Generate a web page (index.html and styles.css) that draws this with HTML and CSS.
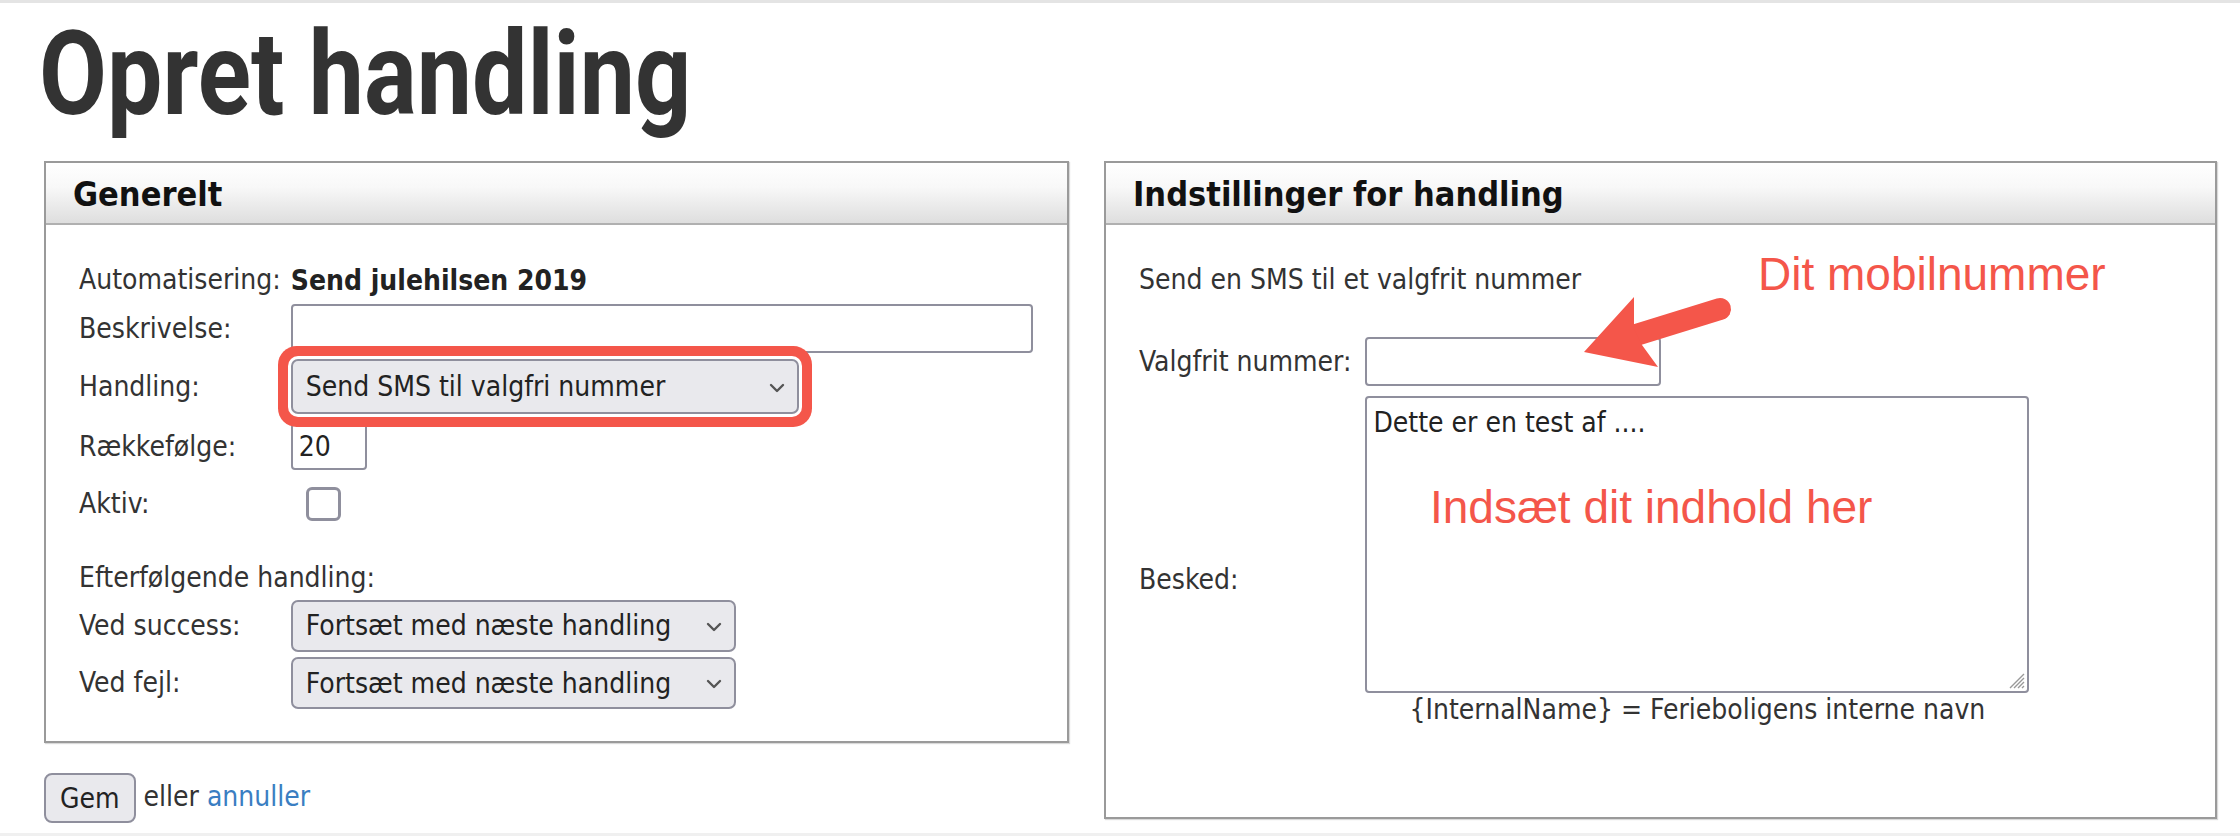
FILE: index.html
```html
<!DOCTYPE html>
<html lang="da">
<head>
  <meta charset="UTF-8">
  <meta name="viewport" content="width=device-width, initial-scale=1.0">
  <title>Opret handling</title>
  <link rel="stylesheet" href="styles.css">
</head>
<body>
  <div class="page">
    <h1>Opret handling</h1>

    <form class="layout">
      <!-- Generelt -->
      <div class="panel panel-general">
        <div class="panel-head">Generelt</div>
        <div class="panel-body fields">
          <span class="label">Automatisering:</span>
          <strong class="value">Send julehilsen 2019</strong>

          <label class="label" for="description">Beskrivelse:</label>
          <input type="text" id="description" class="input input-wide">

          <label class="label" for="action">Handling:</label>
          <div class="select-wrap">
            <select id="action" class="select select-action highlight">
              <option>Send SMS til valgfri nummer</option>
            </select>
            <svg class="chevron" width="16" height="10" viewBox="0 0 16 10"><path d="M2 2 L8 8 L14 2" fill="none" stroke="#555" stroke-width="2.4" stroke-linecap="round" stroke-linejoin="round"/></svg>
          </div>

          <label class="label" for="order">Rækkefølge:</label>
          <input type="text" id="order" class="input input-small" value="20">

          <label class="label" for="active">Aktiv:</label>
          <input type="checkbox" id="active" class="checkbox">

          <span class="label label-group">Efterfølgende handling:</span>

          <label class="label" for="onSuccess">Ved success:</label>
          <div class="select-wrap">
            <select id="onSuccess" class="select select-next">
              <option>Fortsæt med næste handling</option>
            </select>
            <svg class="chevron" width="16" height="10" viewBox="0 0 16 10"><path d="M2 2 L8 8 L14 2" fill="none" stroke="#555" stroke-width="2.4" stroke-linecap="round" stroke-linejoin="round"/></svg>
          </div>

          <label class="label" for="onError">Ved fejl:</label>
          <div class="select-wrap">
            <select id="onError" class="select select-next">
              <option>Fortsæt med næste handling</option>
            </select>
            <svg class="chevron" width="16" height="10" viewBox="0 0 16 10"><path d="M2 2 L8 8 L14 2" fill="none" stroke="#555" stroke-width="2.4" stroke-linecap="round" stroke-linejoin="round"/></svg>
          </div>
        </div>
      </div>

      <!-- Indstillinger for handling -->
      <div class="panel panel-settings">
        <div class="panel-head">Indstillinger for handling</div>
        <div class="panel-body">
          <p class="intro">Send en SMS til et valgfrit nummer</p>
          <div class="fields settings-fields">
            <label class="label" for="number">Valgfrit nummer:</label>
            <input type="text" id="number" class="input input-number">

            <label class="label label-message" for="message">Besked:</label>
            <div class="textarea-wrap">
              <textarea id="message" class="textarea">Dette er en test af ....</textarea>
              <svg class="grip" width="18" height="18" viewBox="0 0 18 18">
                <path d="M17 3 L3 17 M17 7 L7 17 M17 11 L11 17 M17 15 L15 17" stroke="#999" stroke-width="1.4"/>
              </svg>
            </div>

            <span class="hint">{InternalName} = Ferieboligens interne navn</span>
          </div>
        </div>

        <!-- annotations -->
        <span class="note note-number">Dit mobilnummer</span>
        <svg class="note-arrow" width="160" height="90" viewBox="0 0 160 90">
          <line x1="146" y1="24" x2="62" y2="50" stroke="#f4564a" stroke-width="22" stroke-linecap="round"/>
          <path d="M10 67 L60 12 L60 44 L68 60 L84 82 Z" fill="#f4564a"/>
        </svg>
        <span class="note note-message">Indsæt dit indhold her</span>
      </div>

      <div class="actions">
        <button type="button" class="button">Gem</button> eller <a href="#" class="cancel">annuller</a>
      </div>
    </form>
  </div>
</body>
</html>
```

FILE: styles.css
```css
* {
  box-sizing: border-box;
}
body {
  margin: 0;
  background: #fff;
  font-family: "DejaVu Sans Condensed", "DejaVu Sans", sans-serif;
  font-size: 28px;
  color: #333;
}
.page {
  height: 836px;
  padding-left: 44px;
  border-top: 3px solid #e4e4e4;
  border-bottom: 3px solid #f0f0f0;
  overflow: hidden;
}
h1 {
  margin: 13px 0 0 -5px;
  font-family: Roboto, "Liberation Sans", sans-serif;
  font-weight: 700;
  font-size: 116px;
  line-height: 116px;
  color: #333;
  transform: scaleX(0.85);
  transform-origin: left center;
}

/* two panels side by side, actions under the first one */
.layout {
  display: grid;
  grid-template-columns: 1025px 1113px;
  column-gap: 35px;
  align-items: start;
  margin-top: 29px;
}
.panel {
  background: #fff;
  border: 2px solid #9a9a9a;
  box-shadow: 1px 1px 1px rgba(0, 0, 0, 0.15);
}
.panel-general {
  grid-column: 1;
  grid-row: 1;
}
.panel-settings {
  grid-column: 2;
  grid-row: 1 / span 2;
  position: relative;
}
.panel-head {
  height: 62px;
  padding: 2px 0 0 27px;
  border-bottom: 2px solid #b0b0b0;
  background: linear-gradient(#fff 0%, #f8f8f8 40%, #dedede 100%);
  font-weight: bold;
  font-size: 34px;
  line-height: 58px;
  color: #111;
}
.panel-body {
  padding: 33px 33px 27px;
}

/* label / control rows */
.fields {
  display: grid;
  grid-template-columns: max-content 1fr;
  column-gap: 10px;
  align-items: center;
}
.panel-general .fields {
  grid-template-rows: 44px 53px 63px 57px 58px 66px 53px 62px;
}
.label {
  line-height: 1.2;
  color: #333;
}
.label-group {
  grid-column: 1 / -1;
  align-self: end;
  line-height: 42px;
}
.value {
  color: #222;
}
.input, .select, .textarea, .button {
  font: inherit;
  color: #222;
}
.input {
  height: 49px;
  padding: 0 6px;
  border: 2px solid #8f8f9d;
  border-radius: 4px;
  background: #fff;
}
.input-wide {
  width: 742px;
}
.input-small {
  width: 76px;
  height: 47px;
}
.input-number {
  width: 296px;
}
.checkbox {
  appearance: none;
  width: 35px;
  height: 34px;
  margin: 0 0 0 15px;
  border: 3px solid #8f8f9d;
  border-radius: 6px;
  background: #fff;
}
.select-wrap {
  position: relative;
  justify-self: start;
}
.select {
  appearance: none;
  display: block;
  height: 52px;
  padding: 0 40px 0 13px;
  border: 2px solid #8f8f9d;
  border-radius: 7px;
  background: #e9e9ed;
}
.select-action {
  width: 508px;
  height: 55px;
}
.select-next {
  width: 445px;
}
.highlight {
  box-shadow: 0 0 0 3px #fff, 0 0 0 13px #f4564a;
}
.chevron {
  position: absolute;
  right: 14px;
  top: 50%;
  margin-top: -4px;
}

/* settings panel */
.intro {
  margin: 0 0 35px;
  line-height: 44px;
}
.settings-fields {
  column-gap: 14px;
  row-gap: 10px;
}
.label-message {
  padding-top: 70px;
}
.textarea-wrap {
  position: relative;
  justify-self: start;
}
.textarea {
  display: block;
  width: 664px;
  height: 297px;
  padding: 8px 6px;
  border: 2px solid #8f8f9d;
  border-radius: 4px;
  resize: none;
}
.grip {
  position: absolute;
  right: 4px;
  bottom: 4px;
}
.hint {
  grid-column: 2;
  width: 664px;
  margin-top: -10px;
  padding-bottom: 63px;
  text-align: center;
  line-height: 34px;
}

/* red annotations drawn on top of the screenshot */
.note {
  position: absolute;
  font-family: "Liberation Sans", Arial, sans-serif;
  font-size: 46px;
  line-height: 50px;
  color: #f4564a;
}
.note-number {
  left: 652px;
  top: 86px;
}
.note-message {
  left: 324px;
  top: 319px;
}
.note-arrow {
  position: absolute;
  left: 468px;
  top: 122px;
}

/* actions */
.actions {
  grid-column: 1;
  grid-row: 2;
  margin-top: 30px;
  color: #333;
}
.button {
  height: 50px;
  padding: 0 14px;
  border: 2px solid #8f8f9d;
  border-radius: 8px;
  background: #e9e9ed;
  vertical-align: middle;
}
.cancel {
  color: #3a7ec2;
  text-decoration: none;
}
```
